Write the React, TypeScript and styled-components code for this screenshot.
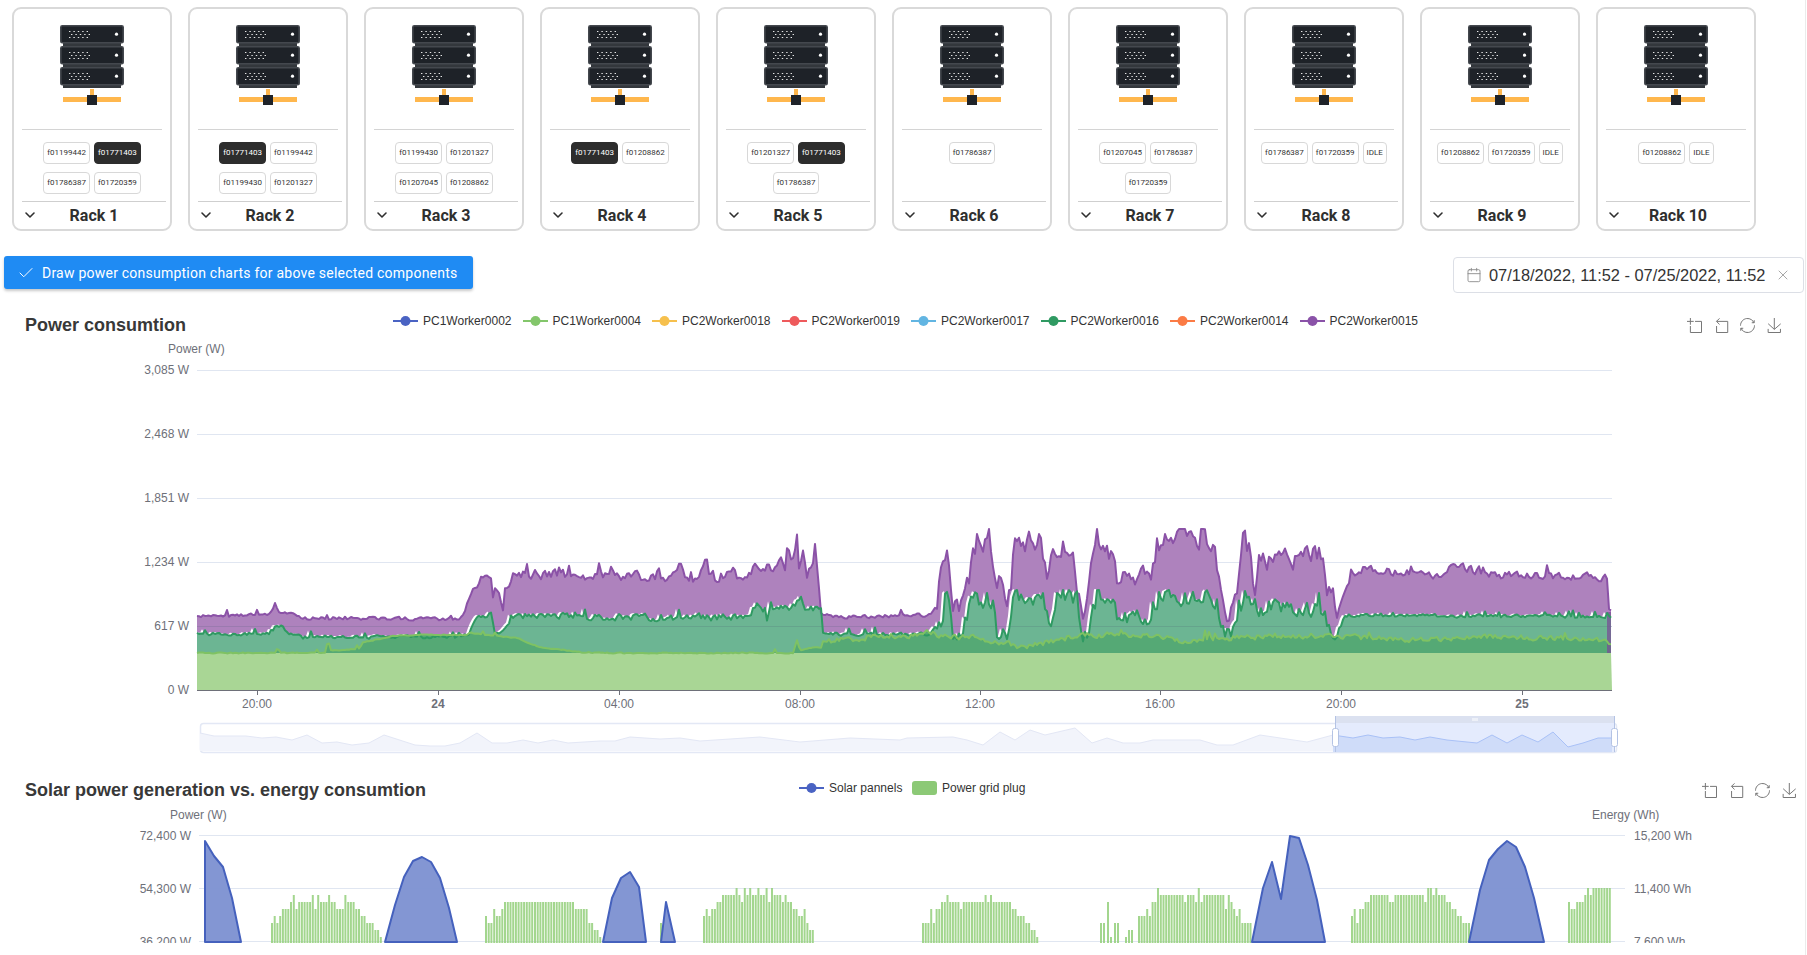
import React, { useMemo } from 'react'
import styled, { createGlobalStyle } from 'styled-components'
import { ChevronDown, Check, Calendar, X } from 'lucide-react'

type Pt = [number, number]

const GlobalStyle = createGlobalStyle`
  html, body {
    margin: 0;
    padding: 0;
    background: #fff;
    overflow: hidden;
    height: 955px;
  }
  body { font-family: "Liberation Sans", Arial, sans-serif; }
`

const Page = styled.div`
  width: 1806px;
  height: 955px;
  overflow: hidden;
  padding-top: 7px;
  box-sizing: border-box;
  border-right: 1px solid #ebebeb;
`

const RackRow = styled.div`
  display: flex;
  gap: 16px;
  padding-left: 12px;
`

const RackCard = styled.div`
  width: 160px;
  height: 224px;
  box-sizing: border-box;
  border: 2px solid #d9d9d9;
  border-radius: 9px;
  padding: 0 4px 0 8px;
  display: flex;
  flex-direction: column;
`

const RackImage = styled.div`
  height: 121px;
  width: 140px;
  box-sizing: border-box;
  padding-top: 16px;
  display: flex;
  justify-content: center;
  border-bottom: 1px solid #d4d4d4;
`

const ChipWrap = styled.div`
  flex: 1;
  width: 140px;
  padding-top: 12px;
  box-sizing: border-box;
  display: flex;
  flex-wrap: wrap;
  justify-content: center;
  align-content: flex-start;
  gap: 8px 4px;
`

const Chip = styled.div<{ $on?: boolean }>`
  height: 22px;
  padding: 0 3px;
  min-width: 22px;
  box-sizing: border-box;
  border: 1px solid ${p => (p.$on ? '#2d2d2d' : '#d8d8d8')};
  border-radius: 4px;
  background: ${p => (p.$on ? '#2d2d2d' : '#fff')};
  color: ${p => (p.$on ? '#fff' : '#333')};
  font: 400 8px/20px Roboto, sans-serif;
  text-align: center;
`

const RackFooter = styled.div`
  height: 28px;
  box-sizing: border-box;
  padding-bottom: 1px;
  border-top: 1px solid #cfcfcf;
  display: grid;
  grid-template-columns: 20px 1fr 20px;
  align-items: center;
  color: #2f2f2f;
`

const RackTitle = styled.div`
  font: 700 16px Roboto, sans-serif;
  text-align: center;
`

const ActionRow = styled.div`
  display: flex;
  justify-content: space-between;
  align-items: flex-start;
  padding: 0 1px 0 4px;
  margin-top: 25px;
  height: 37px;
`

const DrawButton = styled.button`
  height: 33px;
  width: 469px;
  border: 0;
  border-radius: 3px;
  padding: 0 0 0 13px;
  background: #1f8bf3;
  color: #fff;
  box-shadow: 0 2px 3px rgba(0, 0, 0, 0.22);
  display: flex;
  align-items: center;
  gap: 7px;
  font: 400 14px Roboto, sans-serif;
  letter-spacing: 0.23px;
`

const DatePicker = styled.div`
  width: 351px;
  height: 36px;
  margin-top: 1px;
  box-sizing: border-box;
  border: 1px solid #dcdfe6;
  border-radius: 4px;
  padding: 0 12px 0 12px;
  display: flex;
  align-items: center;
  color: #333;
  font-size: 16.4px;
`

const DateText = styled.span`
  margin-left: 7px;
  flex: 1;
  white-space: nowrap;
`

const ChartHead = styled.div<{ $legendAt: number; $right: number; $top: number }>`
  display: grid;
  grid-template-columns: ${p => p.$legendAt - 25}px 1fr auto;
  align-items: center;
  height: 24px;
  padding: 0 ${p => p.$right}px 0 25px;
  margin-top: ${p => p.$top}px;
`

const ChartTitle = styled.div`
  font-size: 18px;
  font-weight: 700;
  color: #383838;
  white-space: nowrap;
`

const Legend = styled.div<{ $lift: number }>`
  display: flex;
  margin-bottom: ${p => p.$lift}px;
`

const LegendItem = styled.div<{ $width: number }>`
  width: ${p => p.$width}px;
  display: flex;
  align-items: center;
  gap: 5px;
  font-size: 12px;
  color: #333;
`

const LegendRect = styled.span<{ $color: string }>`
  width: 25px;
  height: 14px;
  border-radius: 3px;
  background: ${p => p.$color};
`

const Toolbox = styled.div`
  display: flex;
  gap: 11.6px;
  color: #777;
`

const ChartSvg = styled.svg`
  display: block;
  width: 1807px;
`

const AxisText = styled.text<{ $bold?: boolean }>`
  font-family: "Liberation Sans", Arial, sans-serif;
  font-size: 12px;
  fill: #6e7079;
  font-weight: ${p => (p.$bold ? 700 : 400)};
`

const racks: { name: string; chips: string[]; on?: string }[] = [
  { name: 'Rack 1', chips: ['f01199442', 'f01771403', 'f01786387', 'f01720359'], on: 'f01771403' },
  { name: 'Rack 2', chips: ['f01771403', 'f01199442', 'f01199430', 'f01201327'], on: 'f01771403' },
  { name: 'Rack 3', chips: ['f01199430', 'f01201327', 'f01207045', 'f01208862'] },
  { name: 'Rack 4', chips: ['f01771403', 'f01208862'], on: 'f01771403' },
  { name: 'Rack 5', chips: ['f01201327', 'f01771403', 'f01786387'], on: 'f01771403' },
  { name: 'Rack 6', chips: ['f01786387'] },
  { name: 'Rack 7', chips: ['f01207045', 'f01786387', 'f01720359'] },
  { name: 'Rack 8', chips: ['f01786387', 'f01720359', 'IDLE'] },
  { name: 'Rack 9', chips: ['f01208862', 'f01720359', 'IDLE'] },
  { name: 'Rack 10', chips: ['f01208862', 'IDLE'] },
]

const workers = [
  ['PC1Worker0002', '#4a63c3'],
  ['PC1Worker0004', '#83c66b'],
  ['PC2Worker0018', '#f6c04d'],
  ['PC2Worker0019', '#ee5a5c'],
  ['PC2Worker0017', '#62b5e2'],
  ['PC2Worker0016', '#2f9a62'],
  ['PC2Worker0014', '#fb7b45'],
  ['PC2Worker0015', '#8a52a8'],
]

const PURPLE: Pt[] = [
  [197, 616], [270, 615], [275, 603], [280, 615], [293, 612], [300, 618], [460, 619], [465, 610], [472, 590],
  [478, 587], [480, 577], [492, 577], [493, 598], [498, 590], [503, 610], [505, 588], [510, 587], [513, 574],
  [670, 577], [682, 563], [687, 578], [698, 580], [703, 570], [723, 582], [733, 567], [736, 578], [747, 580],
  [755, 562], [760, 577], [767, 565], [773, 570], [780, 558], [785, 570], [787, 548], [792, 565], [797, 540],
  [799, 565], [803, 553], [807, 580], [815, 553], [818, 567], [820, 613], [823, 615], [843, 617], [930, 615],
  [937, 607], [940, 573], [946, 548], [950, 583], [953, 613], [963, 607], [970, 573], [977, 537], [990, 543],
  [993, 577], [1000, 583], [1006, 607], [1012, 570], [1015, 540], [1040, 543], [1047, 577], [1057, 547],
  [1073, 547], [1077, 580], [1082, 623], [1090, 567], [1097, 530], [1100, 550], [1113, 553], [1117, 577],
  [1150, 577], [1155, 553], [1173, 537], [1213, 538], [1220, 580], [1227, 613], [1237, 597], [1242, 543],
  [1250, 557], [1255, 593], [1258, 560], [1323, 557], [1327, 590], [1333, 583], [1338, 617], [1350, 577],
  [1365, 568], [1443, 577], [1450, 566], [1500, 575], [1607, 577], [1608, 607], [1611, 613],
]

const GREEN: Pt[] = [
  [197, 634], [270, 634], [275, 627], [283, 627], [290, 634], [300, 634], [303, 637], [460, 637], [470, 634],
  [475, 618], [492, 616], [495, 636], [500, 636], [503, 630], [508, 628], [511, 615], [670, 618], [750, 617],
  [757, 606], [765, 610], [767, 622], [770, 609], [790, 608], [802, 598], [804, 608], [822, 610], [823, 634],
  [930, 634], [937, 625], [942, 633], [945, 598], [950, 598], [952, 633], [963, 633], [970, 600], [993, 600],
  [997, 632], [1007, 633], [1013, 597], [1043, 600], [1050, 630], [1057, 600], [1077, 600], [1082, 632],
  [1088, 633], [1097, 597], [1110, 600], [1117, 617], [1150, 617], [1160, 595], [1217, 598], [1220, 633],
  [1233, 633], [1243, 598], [1253, 607], [1323, 608], [1330, 633], [1340, 628], [1345, 615], [1600, 617],
  [1611, 617],
]

const LIME: Pt[] = [
  [197, 653], [325, 653], [328, 640], [331, 650], [345, 650], [360, 648], [363, 642], [400, 635], [467, 635],
  [470, 633], [497, 636], [517, 638], [540, 647], [580, 652], [613, 653], [793, 653], [797, 640], [800, 650],
  [810, 648], [822, 647], [823, 641], [860, 639], [867, 637], [933, 634], [967, 637], [1000, 642], [1023, 648],
  [1040, 644], [1080, 635], [1150, 635], [1187, 642], [1217, 638], [1333, 635], [1400, 640], [1500, 636],
  [1600, 640], [1611, 643],
]

const MINI: Pt[] = [
  [200, 733], [214, 736], [246, 736], [262, 738], [276, 737], [292, 740], [307, 735], [322, 743], [337, 742],
  [352, 745], [369, 743], [384, 735], [415, 745], [430, 746], [445, 746], [460, 743], [477, 733], [492, 743],
  [507, 743], [523, 740], [538, 743], [553, 740], [568, 743], [600, 741], [615, 741], [630, 737], [660, 739],
  [680, 738], [700, 741], [760, 737], [800, 742], [850, 738], [900, 740], [907, 738], [953, 737], [967, 740],
  [983, 745], [1000, 732], [1015, 740], [1030, 730], [1045, 735], [1075, 728], [1092, 743], [1107, 738],
  [1123, 743], [1140, 743], [1153, 740], [1200, 740], [1217, 745], [1233, 745], [1260, 735], [1307, 742],
  [1333, 735], [1353, 738], [1368, 735], [1383, 738], [1400, 737], [1415, 740], [1430, 737], [1447, 740],
  [1477, 743], [1492, 735], [1507, 743], [1522, 735], [1538, 742], [1553, 732], [1568, 747], [1583, 743],
  [1598, 738], [1612, 738],
]

const SOLAR: Pt[][] = [
  [[205, 942], [205, 841], [214, 856], [223, 867], [232, 898], [241, 942]],
  [[385, 942], [395, 905], [404, 877], [413, 861], [422, 857], [431, 862], [440, 878], [449, 908], [457, 942]],
  [[603, 942], [612, 898], [621, 878], [630, 872], [639, 887], [646, 942]],
  [[661, 942], [666, 902], [675, 942]],
  [[1252, 942], [1263, 888], [1272, 862], [1281, 899], [1290, 836], [1299, 838], [1308, 865], [1317, 900], [1325, 942]],
  [[1469, 942], [1480, 890], [1489, 860], [1498, 849], [1507, 841], [1516, 847], [1525, 867], [1534, 898], [1544, 942]],
]

const GRID_BARS: [number, number, number][] = [
  [271, 380, 902], [485, 600, 902], [703, 812, 895], [922, 1037, 902], [1138, 1251, 895], [1351, 1470, 895], [1568, 1611, 888],
]

const STRAY_BARS: Pt[] = [
  [660, 923], [1100, 923], [1103, 923], [1107, 902], [1110, 937], [1114, 923], [1117, 923], [1125, 937], [1128, 930], [1131, 930],
]

function rng(seed: number) {
  let s = seed
  return () => {
    s = (s + 0x6d2b79f5) | 0
    let t = Math.imul(s ^ (s >>> 15), 1 | s)
    t = (t + Math.imul(t ^ (t >>> 7), 61 | t)) ^ t
    return ((t ^ (t >>> 14)) >>> 0) / 4294967296
  }
}

function interp(keys: Pt[], x: number) {
  for (let i = 1; i < keys.length; i++) {
    if (x <= keys[i][0]) {
      const [x0, y0] = keys[i - 1]
      const [x1, y1] = keys[i]
      return y0 + ((y1 - y0) * (x - x0)) / (x1 - x0 || 1)
    }
  }
  return keys[keys.length - 1][1]
}

function wobble(keys: Pt[], seed: number, amp: (x: number) => number, spike: number, ceiling: number) {
  const rand = rng(seed)
  const pts: Pt[] = []
  let prev = 0
  for (let x = keys[0][0]; x <= keys[keys.length - 1][0]; x += 2) {
    prev = prev * 0.35 + (rand() - 0.5) * amp(x)
    const up = rand() < spike ? rand() * amp(x) * 0.8 + 3 : 0
    pts.push([x, +Math.max(ceiling, interp(keys, x) + prev - up).toFixed(1)])
  }
  return pts
}

const line = (pts: Pt[]) => 'M' + pts.map(p => p.join(',')).join('L')
const area = (pts: Pt[], base: number) =>
  `${line(pts)}L${pts[pts.length - 1][0]},${base}L${pts[0][0]},${base}Z`

function barPath() {
  const rand = rng(77)
  let d = ''
  const bar = (x: number, top: number) => {
    d += `M${x.toFixed(1)},${top}h2V946h-2Z`
  }
  GRID_BARS.forEach(([from, to, plateau], i) => {
    for (let x = from; x < to; x += 2.72) {
      const edge = Math.min(x - from + 8, i === 6 ? 99 : to - x)
      const drop = edge < 26 ? Math.ceil((26 - edge) / 6) : 0
      const r = rand()
      const jitter = r < 0.12 ? -7 : r < 0.22 ? 7 : 0
      bar(x, plateau + 7 * drop + jitter)
    }
  })
  STRAY_BARS.forEach(([x, top]) => bar(x, top))
  return d
}

function ServerIcon() {
  const units = [0, 21, 42]
  return (
    <svg width="64" height="80" viewBox="0 0 64 80">
      {units.map(y => (
        <g key={y}>
          <rect x="3" y={y + 18} width="58" height="3" fill="#33373c" />
          <rect x="0.8" y={y + 0.8} width="62.4" height="17" rx="1.5" fill="#1e2228" stroke="#44484e" strokeWidth="1.6" />
          <path
            d={`M9,${y + 6.5}h22M11,${y + 9.5}h22M9,${y + 12.5}h22`}
            stroke="#e6e6e6"
            strokeWidth="1.2"
            strokeDasharray="1.4 3"
          />
          <circle cx="56.5" cy={y + 9.2} r="1.6" fill="#fff" />
        </g>
      ))}
      <rect x="30" y="64" width="4" height="9" fill="#ffb74d" />
      <rect x="3" y="72" width="58" height="5" fill="#ffb74d" />
      <rect x="27" y="70" width="10" height="10" fill="#1f2329" />
    </svg>
  )
}

function ToolIcons() {
  const icons = [
    'M0,13.5h26.9M13.5,26.9V0M32.1,13.5H58V58H13.5V32.1',
    'M22,1.4L9.9,13.5l12.3,12.3M10.3,13.5H54.9v44.6H10.3v-26',
    'M47,18.9h9.8V8.7M56.3,20.1C52.1,9,40.5,0.6,26.8,2.1C12.6,3.7,1.6,16.2,2.1,30.6M13,41.1H3.1v10.2M3.7,39.9c4.2,11.1,15.8,19.5,29.5,18c14.2-1.6,25.2-14.1,24.7-28.5',
    'M4.7,22.9L29.3,45.5L54.7,23.4M4.6,43.6L4.6,58L53.8,58L53.8,43.6M29.2,45.1L29.2,0',
  ]
  return (
    <Toolbox>
      {icons.map(d => (
        <svg key={d} width="15" height="15" viewBox="0 0 60 60" fill="none" stroke="currentColor" strokeWidth="4">
          <path d={d} />
        </svg>
      ))}
    </Toolbox>
  )
}

function LineMark({ color }: { color: string }) {
  return (
    <svg width="25" height="14" viewBox="0 0 25 14">
      <path d="M0,7H25" stroke={color} strokeWidth="2" />
      <circle cx="12.5" cy="7" r="5" fill={color} />
    </svg>
  )
}

function PowerChart() {
  const { purple, green, lime, mask } = useMemo(() => {
    const busy = (x: number) => {
      if (x > 935 && x < 1340) return 20
      if (x > 513 && x < 820) return 9
      return x > 1340 ? 7 : 3
    }
    const purple = wobble(PURPLE, 11, busy, 0.06, 529)
    const green = wobble(GREEN, 23, x => (x > 935 && x < 1340 ? 16 : x > 470 && x < 820 ? 6 : 3), 0.04, 590)
    const lime = wobble(LIME, 37, x => (x > 820 ? 5 : 1), 0.015, 630)
    const mask = green.map(([x, y]): Pt => [x - 3, y - 1])
    return { purple, green, lime, mask }
  }, [])
  const grid = [
    [370, '3,085 W'],
    [434, '2,468 W'],
    [498, '1,851 W'],
    [562, '1,234 W'],
    [626, '617 W'],
    [690, '0 W'],
  ] as const
  const ticks: [number, string, boolean?][] = [
    [257, '20:00'], [438, '24', true], [619, '04:00'], [800, '08:00'],
    [980, '12:00'], [1160, '16:00'], [1341, '20:00'], [1522, '25', true],
  ]
  const miniLeft = MINI.filter(p => p[0] <= 1335)
  const miniRight = MINI.filter(p => p[0] >= 1333)
  return (
    <ChartSvg viewBox="0 337 1807 423" height="423">
      <AxisText x="168" y="353">Power (W)</AxisText>
      {grid.map(([y, label]) => (
        <g key={y}>
          {y !== 690 && <path d={`M197,${y + 0.5}H1612`} stroke="#e0e6f1" />}
          <AxisText x="189" y={y + 4} textAnchor="end">{label}</AxisText>
        </g>
      ))}
      <path d={area(purple, 653)} fill="#ae82bd" />
      <path d={area(mask, 660)} fill="#fff" />
      <path d={area(green, 660)} fill="#6cb593" />
      <path d={area(lime, 660)} fill="#55a975" />
      <path d="M197,653H1611L1612,690H197Z" fill="#a9d695" />
      <path d="M197,626.5H1612" stroke="rgba(70,90,110,0.18)" />
      <rect x="1607" y="612" width="4" height="41" fill="rgba(120,80,150,0.75)" />
      <path d={line(purple)} fill="none" stroke="#8b52a7" strokeWidth="2" strokeLinejoin="round" />
      <path d={line(green)} fill="none" stroke="#2f9a62" strokeWidth="2" strokeLinejoin="round" />
      <path d={line(lime)} fill="none" stroke="#7fc263" strokeWidth="2" strokeLinejoin="round" />
      <path d="M197,690.5H1612" stroke="#6e7079" />
      {ticks.map(([x, label, bold]) => (
        <g key={x}>
          <path d={`M${x + 0.5},690V695`} stroke="#6e7079" />
          <AxisText x={x} y="708" textAnchor="middle" $bold={bold}>{label}</AxisText>
        </g>
      ))}

      <rect x="200.5" y="723.5" width="1416" height="29" rx="3" fill="#fff" stroke="#e3e8f5" strokeWidth="1.5" />
      <path d={area(miniLeft, 751)} fill="#f2f4fb" />
      <path d={line(miniLeft)} fill="none" stroke="#e3e7f5" />
      <rect x="1335" y="723" width="279" height="29" fill="#e4ebfd" />
      <path d={area(miniRight, 752)} fill="#cfdcf9" />
      <path d={line(miniRight)} fill="none" stroke="#a9c1f7" />
      <rect x="1335" y="716" width="280" height="7" fill="#dbe1f0" />
      <path d="M1473,718v3M1475,718v3M1477,718v3" stroke="#fff" />
      <path d="M1335.5,716V752M1614.5,716V752" stroke="#b4c3e4" />
      <rect x="1332.5" y="728.5" width="6" height="18" rx="2" fill="#fff" stroke="#b4c3e4" />
      <rect x="1611.5" y="728.5" width="6" height="18" rx="2" fill="#fff" stroke="#b4c3e4" />
    </ChartSvg>
  )
}

function SolarChart() {
  const bars = useMemo(barPath, [])
  const grid = [
    [836, '72,400 W', '15,200 Wh'],
    [889, '54,300 W', '11,400 Wh'],
    [942, '36,200 W', '7,600 Wh'],
  ] as const
  return (
    <ChartSvg viewBox="0 802 1807 141" height="141">
      <AxisText x="170" y="819">Power (W)</AxisText>
      <AxisText x="1592" y="819">Energy (Wh)</AxisText>
      {grid.map(([y, left, right]) => (
        <g key={y}>
          <path d={`M199,${y - 0.5}H1625`} stroke="#e0e6f1" />
          <AxisText x="191" y={y + 4} textAnchor="end">{left}</AxisText>
          <AxisText x="1634" y={y + 4}>{right}</AxisText>
        </g>
      ))}
      <path d={bars} fill="#93cf7a" fillOpacity="0.85" />
      {SOLAR.map(peak => (
        <path
          key={peak[0][0]}
          d={`${line(peak)}Z`}
          fill="#7f93d2"
          fillOpacity="0.97"
          stroke="#4561bd"
          strokeWidth="2"
          strokeLinejoin="round"
        />
      ))}
    </ChartSvg>
  )
}

export default function App() {
  return (
    <Page>
      <GlobalStyle />
      <RackRow>
        {racks.map(rack => (
          <RackCard key={rack.name}>
            <RackImage>
              <ServerIcon />
            </RackImage>
            <ChipWrap>
              {rack.chips.map(chip => (
                <Chip key={chip} $on={chip === rack.on}>{chip}</Chip>
              ))}
            </ChipWrap>
            <RackFooter>
              <ChevronDown size={16} strokeWidth={2.4} />
              <RackTitle>{rack.name}</RackTitle>
            </RackFooter>
          </RackCard>
        ))}
      </RackRow>

      <ActionRow>
        <DrawButton>
          <Check size={18} strokeWidth={1.3} />
          Draw power consumption charts for above selected components
        </DrawButton>
        <DatePicker>
          <Calendar size={16} strokeWidth={1.3} color="#888" />
          <DateText>07/18/2022, 11:52 - 07/25/2022, 11:52</DateText>
          <X size={16} strokeWidth={1.3} color="#999" />
        </DatePicker>
      </ActionRow>

      <ChartHead $legendAt={393} $right={23} $top={20}>
        <ChartTitle>Power consumtion</ChartTitle>
        <Legend $lift={8}>
          {workers.map(([name, color]) => (
            <LegendItem key={name} $width={129.5}>
              <LineMark color={color} />
              {name}
            </LegendItem>
          ))}
        </Legend>
        <ToolIcons />
      </ChartHead>
      <PowerChart />

      <ChartHead $legendAt={799} $right={8} $top={18}>
        <ChartTitle>Solar power generation vs. energy consumtion</ChartTitle>
        <Legend $lift={4}>
          <LegendItem $width={113}>
            <LineMark color="#4a63c3" />
            Solar pannels
          </LegendItem>
          <LegendItem $width={120}>
            <LegendRect $color="#8cc976" />
            Power grid plug
          </LegendItem>
        </Legend>
        <ToolIcons />
      </ChartHead>
      <SolarChart />
    </Page>
  )
}
